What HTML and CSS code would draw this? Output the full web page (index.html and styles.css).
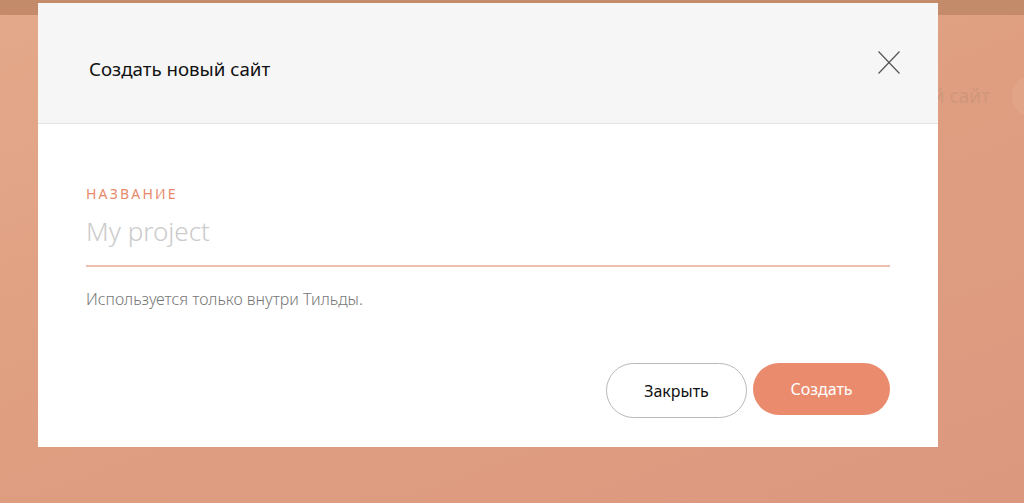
FILE: index.html
```html
<!DOCTYPE html>
<html lang="ru">
<head>
    <meta charset="UTF-8">
    <meta name="viewport" content="width=device-width, initial-scale=1.0">
    <title>Создать новый сайт</title>
    <link rel="stylesheet" href="styles.css">
</head>
<body>
    <div class="page">
        <div class="topbar"></div>
        <div class="page-head">
            <span class="page-head-text">Создать новый сайт</span>
            <span class="page-head-btn"></span>
        </div>
    </div>

    <div class="modal">
        <div class="modal-header">
            <h2 class="modal-title">Создать новый сайт</h2>
            <button class="modal-close" aria-label="Закрыть">
                <svg width="22" height="23" viewBox="0 0 22 23">
                    <path d="M0.5 0.5 L21.5 22.5 M21.5 0.5 L0.5 22.5" stroke="#555" stroke-width="1.2" fill="none"/>
                </svg>
            </button>
        </div>
        <div class="modal-body">
            <label class="field-label">Название</label>
            <input class="field-input" type="text" placeholder="My project">
            <p class="field-hint">Используется только внутри Тильды.</p>
            <div class="modal-actions">
                <button class="btn btn-outline">Закрыть</button>
                <button class="btn btn-primary">Создать</button>
            </div>
        </div>
    </div>
</body>
</html>
```

FILE: styles.css
```css
body {
    margin: 0;
    height: 503px;
    overflow: hidden;
    font-family: "Noto Sans", Arial, sans-serif;
    background: linear-gradient(160deg, #e4a98a 0%, #df9e80 50%, #dc987f 100%);
}
.page {
    height: 503px;
}
.topbar {
    height: 15px;
    background: #c48b6b;
}
.page-head {
    display: flex;
    justify-content: flex-end;
    align-items: center;
    gap: 22px;
    padding-top: 59px;
    margin-right: -32px;
}
.page-head-text {
    font-size: 19px;
    color: #cf977b;
}
.page-head-btn {
    width: 44px;
    height: 44px;
    border-radius: 50%;
    background: #e2a486;
}
.modal {
    position: absolute;
    left: 38px;
    top: 3px;
    width: 900px;
    height: 444px;
    background: #fff;
}
.modal-header {
    height: 120px;
    background: #f6f6f6;
    border-bottom: 1px solid #e4e4e4;
    display: flex;
    align-items: center;
    justify-content: space-between;
    padding: 0 38px 0 51px;
}
.modal-title {
    margin: 10px 0 0;
    font-size: 18.7px;
    font-weight: 400;
    color: #111;
}
.modal-close {
    border: none;
    background: none;
    padding: 0;
    margin-top: 2px;
    cursor: pointer;
}
.modal-body {
    padding: 60px 48px 0;
    display: flex;
    flex-direction: column;
}
.field-label {
    font-size: 14px;
    letter-spacing: 2.2px;
    text-transform: uppercase;
    color: #e8896c;
}
.field-input {
    margin-top: 8px;
    border: none;
    border-bottom: 2px solid #efbfae;
    padding: 2px 0 16px;
    font-family: inherit;
    font-size: 26px;
    font-weight: 300;
    color: #333;
    outline: none;
}
.field-input::placeholder {
    color: #cbcbcb;
}
.field-hint {
    margin: 21px 0 0;
    font-size: 16px;
    font-weight: 300;
    color: #777;
}
.modal-actions {
    display: flex;
    justify-content: flex-end;
    align-items: flex-start;
    gap: 6px;
    margin-top: 53px;
}
.btn {
    height: 55px;
    border-radius: 28px;
    font-family: inherit;
    font-size: 16px;
    cursor: pointer;
}
.btn-outline {
    width: 141px;
    background: #fff;
    border: 1px solid #b9b9b9;
    color: #111;
}
.btn-primary {
    width: 137px;
    height: 52px;
    background: #ea8b6e;
    border: none;
    color: #fff;
}
```
